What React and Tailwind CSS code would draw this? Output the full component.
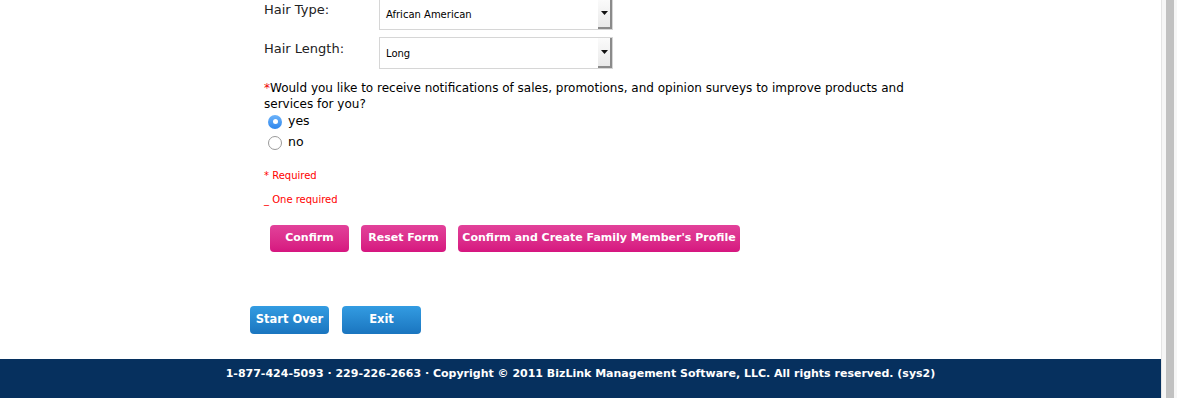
import React from "react"

const font = { fontFamily: '"DejaVu Sans", Verdana, sans-serif' }

const Select = ({ value }) => (
  <div className="flex h-[32px] w-[234px] items-stretch border border-[#d6d6d6] bg-white">
    <div className="flex flex-1 items-center pl-[6px] text-[10px] text-black">{value}</div>
    <div className="flex w-[14px] items-center justify-center border-r-2 border-b-2 border-r-[#8a8a8a] border-b-[#8a8a8a] bg-gradient-to-b from-[#fbfbfb] to-[#e9e9e9]">
      <svg width="7" height="4" viewBox="0 0 7 4"><path d="M0 0h7L3.5 4z" fill="#111" /></svg>
    </div>
  </div>
)

const FieldRow = ({ label, value }) => (
  <div className="flex items-start">
    <div className="w-[115px] pt-[2px] text-[13px] text-[#222]">{label}</div>
    <Select value={value} />
  </div>
)

const Radio = ({ checked, label }) => (
  <div className="flex h-[21px] items-center pl-[4px]">
    {checked ? (
      <span className="flex h-[14px] w-[14px] items-center justify-center rounded-full bg-gradient-to-b from-[#6cb3fa] to-[#2d86ec]">
        <span className="h-[5px] w-[5px] rounded-full bg-white" />
      </span>
    ) : (
      <span className="h-[14px] w-[14px] rounded-full border border-[#9a9a9a] bg-white" />
    )}
    <span className="ml-[6px] text-[12.5px] text-black">{label}</span>
  </div>
)

const PinkButton = ({ children, w }) => (
  <button className={`h-[27px] rounded-[4px] bg-gradient-to-b from-[#e2419a] to-[#d6157f] text-center text-[11px] font-bold text-white ${w}`}>
    {children}
  </button>
)

const BlueButton = ({ children, w }) => (
  <button className={`h-[28px] rounded-[4px] bg-gradient-to-b from-[#339ce2] to-[#1a75bf] text-[11.5px] font-bold text-white ${w}`}>
    {children}
  </button>
)

export default function App() {
  return (
    <div className="flex h-[398px] w-[1177px] overflow-hidden bg-white" style={font}>
      <div className="flex flex-1 flex-col">
        <div className="flex-1 pl-[264px]">
          <div className="-mt-[2px] flex flex-col gap-[7px]">
            <FieldRow label="Hair Type:" value="African American" />
            <FieldRow label="Hair Length:" value="Long" />
          </div>
          <p className="mt-[11px] w-[660px] text-[12px] leading-[16px] text-black before:text-[#e00] before:content-['*']">
            Would you like to receive notifications of sales, promotions, and opinion surveys to improve products and services for you?
          </p>
          <div className="-mt-[1px]">
            <Radio checked label="yes" />
            <Radio label="no" />
          </div>
          <div className="mt-[16px] text-[10px] leading-[14px] text-[#f00]">* Required</div>
          <div className="mt-[10px] text-[10px] leading-[14px] text-[#f00]">_ One required</div>
          <div className="mt-[18px] flex gap-[12px] pl-[6px]">
            <PinkButton w="w-[79px]">Confirm</PinkButton>
            <PinkButton w="w-[85px]">Reset Form</PinkButton>
            <PinkButton w="w-[282px]">Confirm and Create Family Member's Profile</PinkButton>
          </div>
          <div className="-ml-[14px] mt-[54px] flex gap-[13px]">
            <BlueButton w="w-[79px]">Start Over</BlueButton>
            <BlueButton w="w-[79px]">Exit</BlueButton>
          </div>
        </div>
        <footer className="flex h-[39px] items-center justify-center bg-[#06305e] pb-[11px] pt-[2px] text-[11px] font-bold text-white">
          1-877-424-5093 · 229-226-2663 · Copyright © 2011 BizLink Management Software, LLC. All rights reserved. (sys2)
        </footer>
      </div>
      <div className="flex w-[16px] justify-center border-l border-[#e4e4e4] bg-[#f6f6f6]">
        <div className="h-full w-[8px] bg-[#c1c1c1]" />
      </div>
    </div>
  )
}
